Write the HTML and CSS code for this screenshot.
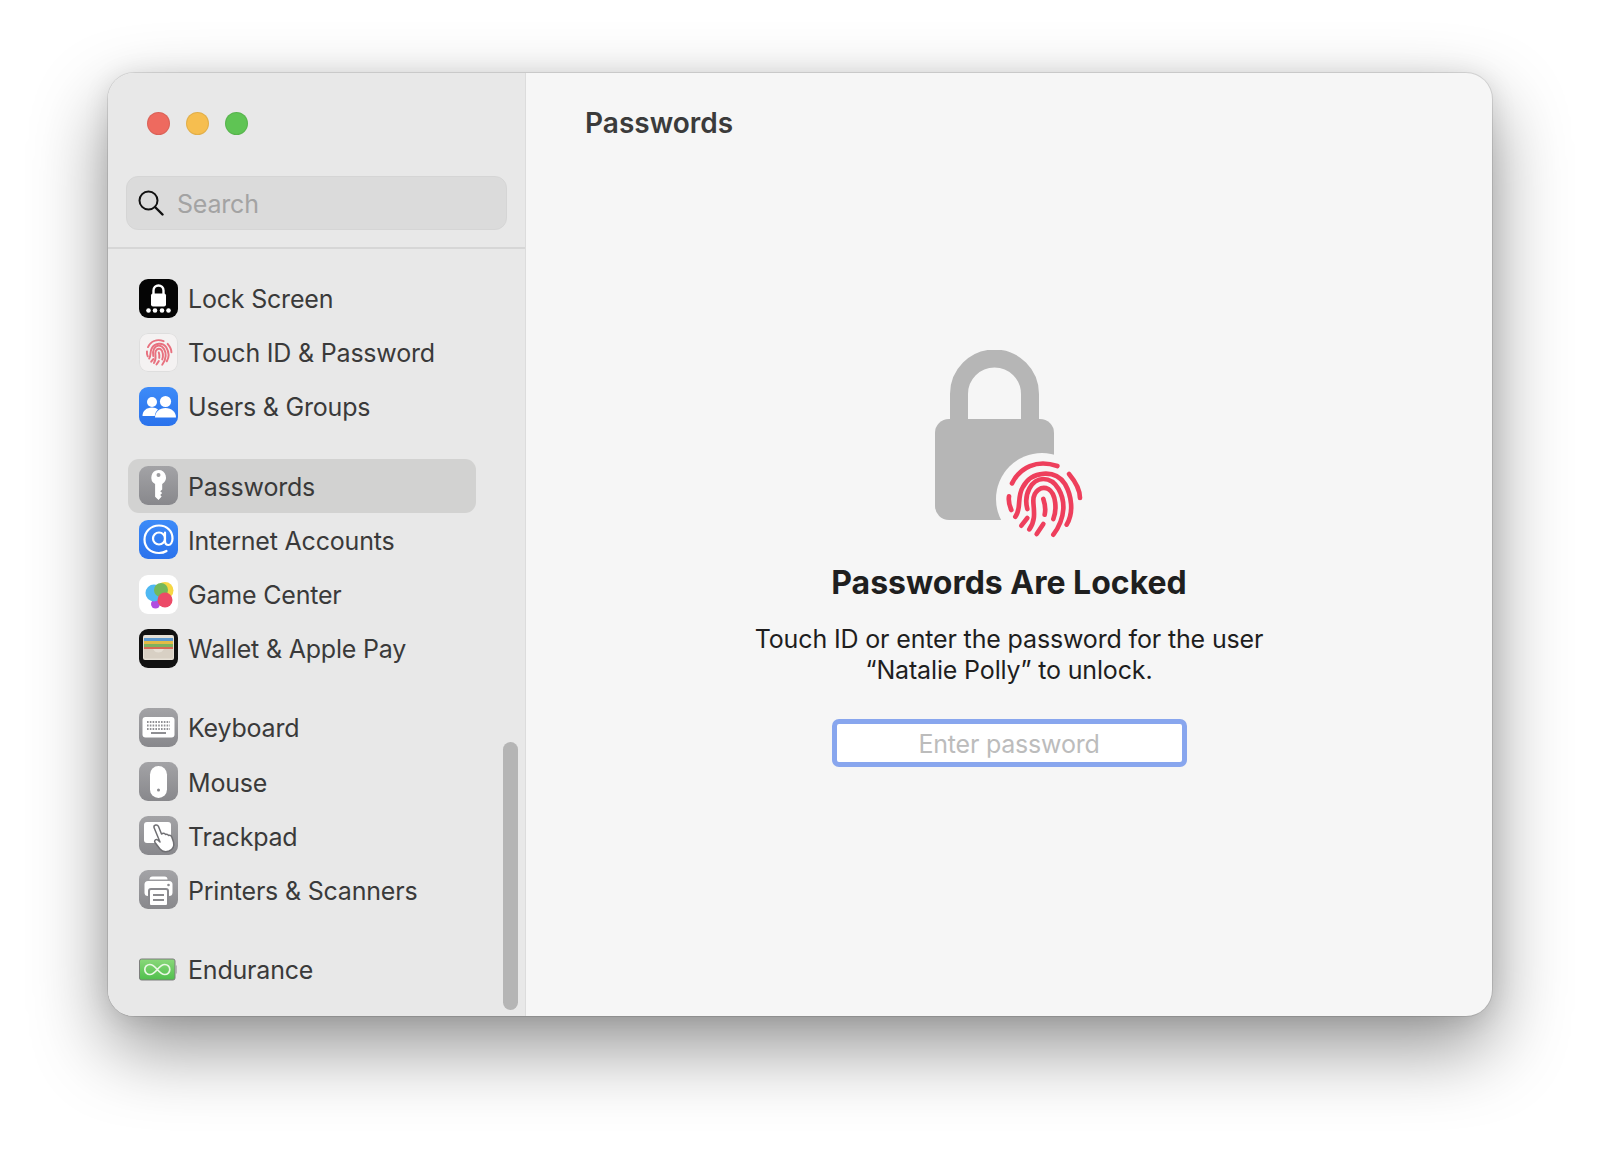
FILE: index.html
```html
<!DOCTYPE html>
<html lang="en">
<head>
<meta charset="utf-8">
<title>Passwords</title>
<link rel="stylesheet" href="styles.css">
</head>
<body>
<svg class="defs" width="0" height="0" aria-hidden="true">
  <symbol id="fp" viewBox="0 0 255 270">
    <g fill="none" stroke="currentColor" stroke-linecap="round">
      <path d="M36 88C60 40 110 15 172 36"/>
      <path d="M207 60C228 85 240 110 240 132"/>
      <path d="M27 127C25 140 28 155 34 168"/>
      <path d="M46 188C65 165 50 130 68 100C95 50 165 45 195 90C215 125 222 175 200 212"/>
      <path d="M82 165C70 120 95 75 130 75C170 75 192 125 190 165C188 195 175 222 160 242"/>
      <path d="M88 226C110 195 100 165 100 140C100 110 125 95 145 105C170 120 170 170 160 195"/>
      <path d="M130 135C135 150 138 165 134 182"/>
      <path d="M64 215L82 192"/>
      <path d="M110 240L130 210"/>
    </g>
  </symbol>
</svg>
<div class="window">
  <aside class="sidebar">
    <div class="sidebar-head">
      <div class="lights"><span class="light red"></span><span class="light yellow"></span><span class="light green"></span></div>
      <div class="search">
        <svg class="search-icon" viewBox="0 0 26 26"><circle cx="10.500" cy="10.500" r="9" fill="none" stroke="#111" stroke-width="2"/><path d="M17 17L24.500 24.500" stroke="#111" stroke-width="2.400" stroke-linecap="round"/></svg>
        <span class="search-text">Search</span>
      </div>
    </div>
    <nav class="nav">
      <div class="group">
        <div class="row"><span class="icon i-black"><svg viewBox="0 0 39 39"><path d="M14.500 15v-3.500a5 5 0 0 1 10 0V15" fill="none" stroke="#fff" stroke-width="2.400"/><rect x="12" y="14.500" width="15" height="13" rx="2" fill="#fff"/><g fill="#fff"><circle cx="9.500" cy="31.500" r="2.300"/><circle cx="16" cy="31.500" r="2.300"/><circle cx="23" cy="31.500" r="2.300"/><circle cx="29.500" cy="31.500" r="2.300"/></g></svg></span><span class="label">Lock Screen</span></div>
        <div class="row"><span class="icon i-white"><svg class="fp-small" viewBox="0 0 39 39"><use href="#fp" x="4" y="4" width="31" height="31"/></svg></span><span class="label">Touch ID &amp; Password</span></div>
        <div class="row"><span class="icon i-blue"><svg viewBox="0 0 39 39"><g fill="#fff"><circle cx="13" cy="15" r="5"/><circle cx="26.500" cy="14.500" r="5.600"/><path d="M3.500 29c0-5 4-8.500 9.500-8.500 2.500 0 4.500.7 6 2-2 1.700-3 4-3.200 6.500z"/><path d="M16 30.500c0-5.500 4.500-9.500 10.500-9.500S37 25 37 30.500z"/></g></svg></span><span class="label">Users &amp; Groups</span></div>
      </div>
      <div class="group">
        <div class="row selected"><span class="icon i-gray"><svg viewBox="0 0 39 39"><path fill="#fff" fill-rule="evenodd" d="M19.500 4a7.500 7.500 0 0 1 3.700 14V23.500l-2 1.800 2 1.800-2 1.800 1.500 1.500-3.200 3.600-3.400-3.200V18a7.500 7.500 0 0 1 3.400-14zm0 3a2 2 0 1 0 0 4 2 2 0 0 0 0-4z"/></svg></span><span class="label">Passwords</span></div>
        <div class="row"><span class="icon i-blue"><svg viewBox="0 0 39 39"><g fill="none" stroke="#fff" stroke-width="2.200" stroke-linecap="round"><circle cx="20" cy="18.500" r="6"/><path d="M26 12.500v8.500c0 2.500 1.500 4 3.500 4s4-2.500 4-6.500C33.500 11 28 5.500 20 5.500S5.500 11.500 5.500 19.500 11.500 33 20 33c3 0 5.500-.7 7.500-2"/></g></svg></span><span class="label">Internet Accounts</span></div>
        <div class="row"><span class="icon i-game"><svg viewBox="0 0 39 39"><circle cx="16.500" cy="29" r="4.500" fill="#b04de0"/><circle cx="15" cy="18" r="8.500" fill="#4fb8f2"/><circle cx="26" cy="15.500" r="8.500" fill="#f6d743"/><circle cx="22" cy="15" r="7" fill="#74b85a"/><circle cx="26" cy="25" r="7.500" fill="#ec4a67"/></svg></span><span class="label">Game Center</span></div>
        <div class="row"><span class="icon i-wallet"><svg viewBox="0 0 39 39"><rect x="4" y="6" width="31" height="25" rx="2" fill="#e6e0d6"/><rect x="5" y="9" width="29" height="3" fill="#5d9ad0"/><rect x="5" y="12" width="29" height="3" fill="#e3bb46"/><rect x="5" y="15" width="29" height="3" fill="#7fb25f"/><rect x="5" y="18" width="29" height="2" fill="#d96a55"/><path d="M5 20h8.500c1.500 0 1.500 3.500 6 3.500s4.500-3.500 6-3.500H34v9.500H5z" fill="#d8d0c4"/></svg></span><span class="label">Wallet &amp; Apple Pay</span></div>
      </div>
      <div class="group">
        <div class="row"><span class="icon i-gray"><svg viewBox="0 0 39 39"><rect x="3.500" y="9" width="32" height="20.500" rx="3" fill="#fff"/><g stroke="#8f8f93" stroke-width="2" stroke-dasharray="1.600 1.200"><path d="M8 14h23"/><path d="M8 17.500h23"/><path d="M8 21h23"/></g><path d="M12 25h15" stroke="#8f8f93" stroke-width="2"/></svg></span><span class="label">Keyboard</span></div>
        <div class="row"><span class="icon i-gray"><svg viewBox="0 0 39 39"><rect x="11" y="4" width="17" height="32" rx="8.500" fill="#fff"/><circle cx="19.500" cy="28" r="1.500" fill="#8a8a8e"/></svg></span><span class="label">Mouse</span></div>
        <div class="row"><span class="icon i-gray"><svg viewBox="0 0 39 39"><rect x="5" y="6" width="27" height="21" rx="3" fill="#fff"/><path fill="#fff" stroke="#6f6f73" stroke-width="1.500" stroke-linejoin="round" d="M15 11.500c-.5-3 3.500-3.500 4.500-1l3 7.500 1-.5c1.200-.5 2.500 0 3 1 1.200-.5 2.500 0 3 1 1.300-.5 2.700.2 3.300 1.500l1.700 5c1 4-1 7.500-4.500 9-3.500 1.300-7 .5-9-2l-5-6.500c-1.300-2 1-3.800 2.700-2.500l2.300 2z"/></svg></span><span class="label">Trackpad</span></div>
        <div class="row"><span class="icon i-gray"><svg viewBox="0 0 39 39"><path d="M10.500 9.500c0-2 1-3 3-3h12c2 0 3 1 3 3z" fill="#fff"/><rect x="5.500" y="11" width="28" height="15" rx="3.500" fill="#fff"/><rect x="10" y="19" width="19" height="17" rx="2" fill="#fff" stroke="#8a8a8e" stroke-width="2"/><path d="M14 25h11M14 30h11" stroke="#8a8a8e" stroke-width="1.800"/><circle cx="29.500" cy="15" r="1.300" fill="#8a8a8e"/></svg></span><span class="label">Printers &amp; Scanners</span></div>
      </div>
      <div class="group">
        <div class="row"><span class="icon i-battery"><svg viewBox="0 0 39 39"><defs><linearGradient id="bg" x1="0" y1="0" x2="0" y2="1"><stop offset="0" stop-color="#8ad87a"/><stop offset="1" stop-color="#4fbf4c"/></linearGradient></defs><rect x=".5" y="9" width="35.500" height="21" rx="2" fill="url(#bg)" stroke="#7d7d7d"/><path d="M37 16v7" stroke="#a8a8a8" stroke-width="1.600" stroke-linecap="round"/><path d="M18.300 19.500c-2.500-3-4.500-5-7.500-5a5 5 0 0 0 0 10c3 0 5-2 7.500-5s4.500-5 7.500-5a5 5 0 0 1 0 10c-3 0-5-2-7.500-5z" fill="none" stroke="#e9f7e4" stroke-width="1.700"/></svg></span><span class="label">Endurance</span></div>
      </div>
    </nav>
    <div class="scrollbar"></div>
  </aside>
  <main class="content">
    <h1 class="title">Passwords</h1>
    <div class="locked">
      <div class="hero">
        <svg class="hero-lock" viewBox="0 0 119 170"><path d="M24 75V44a35.500 35.500 0 0 1 71 0v31" fill="none" stroke="#b6b6b6" stroke-width="18"/><rect x="0" y="69" width="119" height="101" rx="14" fill="#b6b6b6"/></svg>
        <span class="hero-badge"><svg class="hero-fp"><use href="#fp"/></svg></span>
      </div>
      <h2 class="heading">Passwords Are Locked</h2>
      <p class="message">Touch ID or enter the password for the user<br>“Natalie Polly” to unlock.</p>
      <div class="field">Enter password</div>
    </div>
  </main>
</div>
</body>
</html>
```
FILE: styles.css
```css
* { box-sizing: border-box; }
html, body { margin: 0; height: 100%; }
body {
  background: #fff;
  padding: 73px 108px 0;
  font-family: Inter, "Liberation Sans", sans-serif;
  overflow: hidden;
}
.defs { position: absolute; }
.window {
  width: 1384px;
  height: 943px;
  display: flex;
  position: relative;
  border-radius: 26px;
  overflow: hidden;
  background: #f6f6f6;
  box-shadow: 0 0 0 1px rgba(0,0,0,.1), 0 32px 76px rgba(0,0,0,.42), 0 2px 26px rgba(0,0,0,.1);
}
.sidebar {
  width: 418px;
  flex: none;
  background: #e8e8e8;
  border-right: 1.500px solid #dcdcdc;
  position: relative;
}
.sidebar-head {
  height: 176px;
  padding: 39px 18px 0;
  border-bottom: 2px solid #d6d6d6;
}
.lights { display: flex; gap: 16px; padding-left: 21px; margin-bottom: 41px; }
.light { width: 23px; height: 23px; border-radius: 50%; border: 1px solid rgba(0,0,0,.08); }
.red { background: #ee6a5f; }
.yellow { background: #f6be4f; }
.green { background: #5fc454; }
.search {
  height: 54px;
  width: 381px;
  display: flex;
  align-items: center;
  gap: 13px;
  padding-left: 12px;
  background: #dbdbdb;
  border: 1px solid #d5d5d5;
  border-radius: 12px;
}
.search-icon { width: 26px; height: 26px; flex: none; margin-left: -1px; }
.search-text { font-size: 25px; letter-spacing: -.2px; padding-top: 1px; color: #a3a3a3; }
.nav { padding: 22px 0 0 20px; display: flex; flex-direction: column; gap: 25px; }
.row {
  width: 348px;
  height: 54.200px;
  display: flex;
  align-items: center;
  gap: 10px;
  padding-left: 11px;
  border-radius: 11px;
}
.selected { background: #d2d2d1; }
.label { font-size: 25px; letter-spacing: -.2px; padding-top: 2px; color: #3a3a3a; white-space: nowrap; }
.icon { width: 39px; height: 39px; flex: none; border-radius: 9px; overflow: hidden; }
.icon svg { display: block; width: 39px; height: 39px; }
.i-black { background: #050505; }
.i-white { background: #f4f2f2; box-shadow: inset 0 0 0 1px #dedede; }
.fp-small { color: #e8717f; stroke-width: 17; }
.i-blue { background: linear-gradient(#3d8bf8, #2a72ec); }
.i-gray { background: linear-gradient(#a3a3a6, #88888c); }
.i-game { background: #fff; }
.i-wallet { background: #111; }
.i-battery { overflow: visible; }
.scrollbar {
  position: absolute;
  left: 395px;
  top: 669px;
  width: 15px;
  height: 268px;
  border-radius: 8px;
  background: #b5b5b5;
}
.content { flex: 1; padding: 0 0 0 59px; }
.title { margin: 0; height: 102px; line-height: 101px; font-size: 28px; font-weight: 600; color: #3b3b3b; }
.locked { margin-left: -59px; display: flex; flex-direction: column; align-items: center; }
.hero { width: 119px; height: 170px; margin: 175px 0 0 -29px; position: relative; }
.hero-lock { display: block; width: 119px; height: 170px; }
.hero-badge {
  position: absolute;
  left: 61px;
  top: 103px;
  width: 92px;
  height: 92px;
  border-radius: 50%;
  background: #f6f6f6;
  display: flex;
  align-items: center;
  justify-content: center;
}
.hero-fp { width: 85px; height: 90px; color: #ee3f5c; stroke-width: 14; }
.heading { margin: 43px 0 0; font-size: 32px; line-height: 40px; font-weight: 700; color: #1f1f1f; white-space: nowrap; }
.message { margin: 21px 0 0; font-size: 25px; letter-spacing: -.15px; line-height: 30.600px; color: #1e1e1e; text-align: center; }
.field {
  width: 355px;
  height: 48px;
  margin-top: 34px;
  border: 5px solid #88a6ee;
  border-radius: 7px;
  background: #fff;
  font-size: 25px;
  letter-spacing: -.2px;
  line-height: 40px;
  color: #bcbcbc;
  text-align: center;
}
```
